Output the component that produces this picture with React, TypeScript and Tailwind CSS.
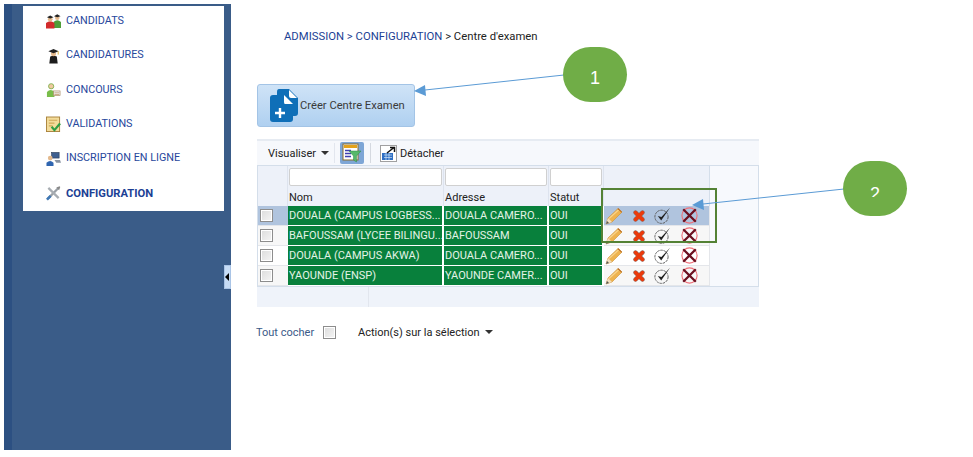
import React from 'react';

const Pencil = () => (
  <svg width="18" height="18" viewBox="0 0 18 18">
    <path d="M1 17 L3 11 L13 1.5 L17 5 L7 15 Z" fill="#eeb34f" stroke="#c98f35" strokeWidth="0.6" />
    <path d="M4 11.5 L14 2.5" stroke="#f8d48c" strokeWidth="1.2" />
    <path d="M12.5 2 L16.5 5.5 L17 5 L13.5 1.2 Z" fill="#b5651d" />
    <path d="M1 17 L3 11 L7 15 Z" fill="#f2dfc0" />
    <path d="M1 17 L2 14 L4 16 Z" fill="#555" />
  </svg>
);

const RedCross = () => (
  <svg width="12" height="12" viewBox="0 0 12 12">
    <path d="M2.5 2.5 L9.5 9.5 M9.5 2.5 L2.5 9.5" stroke="#8f6a60" strokeWidth="4.4" strokeLinecap="round" />
    <path d="M2.5 2.5 L9.5 9.5 M9.5 2.5 L2.5 9.5" stroke="#ec3a0c" strokeWidth="3.2" strokeLinecap="round" />
  </svg>
);

const CheckCircle = () => (
  <svg width="17" height="17" viewBox="0 0 17 17">
    <circle cx="7.5" cy="9.8" r="6.6" fill="none" stroke="#555" strokeWidth="0.9" strokeDasharray="2.5 0.8" />
    <path d="M3.8 9 L7.2 13.4 L16 0.8 L7.4 10 Z" fill="#222" />
  </svg>
);

const BigCross = () => (
  <svg width="17" height="17" viewBox="0 0 17 17">
    <circle cx="8.5" cy="8.5" r="7.6" fill="none" stroke="#ee6f78" strokeWidth="1.1" />
    <path d="M2.2 2.2 L14.8 14.8 M14.8 2.2 L2.2 14.8" stroke="#6b1020" strokeWidth="2.3" />
  </svg>
);

const NewDocIcon = () => (
  <svg width="30" height="34" viewBox="0 0 30 34">
    <path d="M10 0 H20 L29 9 V24 Q29 27 26 27 H24 V20 H8 V3 Q8 0 10 0 Z" fill="#0f6fb8" />
    <path d="M4 6 H15 L24 15 V30 Q24 33 21 33 H4 Q1 33 1 30 V9 Q1 6 4 6 Z" fill="#0f6fb8" />
    <path d="M15 6 L24 15 H16 Q15 15 15 13 Z" fill="#fff" />
    <path d="M20 1 L28 9 H22 Q20 9 20 7 Z" fill="#fff" />
    <path d="M11 19 V29 M6 24 H16" stroke="#fff" strokeWidth="2.4" />
  </svg>
);

const FilterIcon = () => (
  <svg width="20" height="20" viewBox="0 0 20 20">
    <rect x="1" y="1" width="15" height="16" fill="#fff" stroke="#8a6d2a" />
    <rect x="2" y="2" width="13" height="3" fill="#e3a21a" />
    <path d="M3 7.5 H9 M3 10.5 H9 M3 13.5 H9" stroke="#3f3fb0" strokeWidth="1.6" />
    <path d="M7 8 H19 L14.5 13 V19 L11.5 17 V13 Z" fill="#57b86a" stroke="#2e8a46" strokeWidth="0.5" />
  </svg>
);

const DetachIcon = () => (
  <svg width="17" height="17" viewBox="0 0 17 17">
    <rect x="0.5" y="0.5" width="16" height="16" fill="#fff" stroke="#444" strokeDasharray="1 1" />
    <rect x="2" y="8" width="11" height="7" fill="#2f6fc4" />
    <path d="M4 10 H12 M4 12.5 H12 M6 8 V15 M9 8 V15" stroke="#cfe2f7" strokeWidth="0.7" />
    <path d="M7 8 L14 2.5 M10 2.5 H14.5 V7" stroke="#111" strokeWidth="1.5" fill="none" />
  </svg>
);

const PeopleIcon = () => (
  <svg width="16" height="16" viewBox="0 0 16 16">
    <path d="M8 9 Q12 5.5 16 9 V15.5 H8 Z" fill="#4f9d38" />
    <circle cx="12" cy="4.5" r="2.4" fill="#e3b98d" />
    <path d="M8.5 2.8 L12 0.8 L15.5 2.8 L12 4 Z" fill="#222" />
    <path d="M0 10 Q4.5 6.5 9 10 V16 H0 Z" fill="#d22b2b" />
    <circle cx="4.5" cy="6" r="2.5" fill="#e3b98d" />
    <path d="M1 4 L4.5 2.2 L8 4 L4.5 5.2 Z" fill="#222" />
  </svg>
);

const GraduateIcon = () => (
  <svg width="16" height="16" viewBox="0 0 16 16">
    <path d="M3.5 16 L4.5 8.5 Q8 6.8 11.5 8.5 L12.5 16 Z" fill="#1c1c1c" />
    <circle cx="8" cy="5.5" r="2.7" fill="#e3b98d" />
    <path d="M2.5 3 L8 0.5 L13.5 3 L8 5 Z" fill="#222" />
    <path d="M13 3 V6.5" stroke="#e0b030" />
  </svg>
);

const ConcoursIcon = () => (
  <svg width="16" height="16" viewBox="0 0 16 16">
    <circle cx="5.5" cy="4" r="2.8" fill="#f0c9a0" stroke="#6aa83a" strokeWidth="0.8" />
    <path d="M1 15.5 V10 Q5 6 9 10 V15.5 Z" fill="#79bd4a" />
    <rect x="8" y="9" width="7" height="5" fill="#eee" stroke="#a98a62" strokeWidth="0.7" />
    <path d="M9 11 H14 M9 12.8 H14" stroke="#b07a3a" strokeWidth="0.6" />
  </svg>
);

const ValidationIcon = () => (
  <svg width="16" height="17" viewBox="0 0 16 17">
    <rect x="0.5" y="0.5" width="14" height="15.5" fill="#f3dc9a" stroke="#a9823a" />
    <path d="M3 4 H12 M3 7 H9 M3 10 H7" stroke="#cfa95a" strokeWidth="1.2" />
    <path d="M6 11 L9 14.5 L15 7.5" fill="none" stroke="#2f9e44" strokeWidth="2.4" />
  </svg>
);

const OnlineIcon = () => (
  <svg width="16" height="16" viewBox="0 0 16 16">
    <rect x="6" y="1" width="8" height="6" fill="#3f5f8f" stroke="#26364f" strokeWidth="0.6" />
    <path d="M9 9 H15 L16 12 H11 Z" fill="#8a94a3" />
    <circle cx="4.5" cy="7" r="2.5" fill="#e3b98d" />
    <path d="M0.5 15.5 V12 Q4.5 8.5 8 12 V15.5 Z" fill="#2f65b0" />
  </svg>
);

const ToolsIcon = () => (
  <svg width="16" height="16" viewBox="0 0 16 16">
    <path d="M2 14 L13 3" stroke="#9aa0a6" strokeWidth="2.4" />
    <path d="M2.5 2.5 L13.5 13.5" stroke="#a8adb2" strokeWidth="2.4" />
    <path d="M1 15 L5 11" stroke="#3f78b5" strokeWidth="2.8" />
    <path d="M11 2 L14.5 0.8 L15.2 1.5 L14 5" fill="#888" />
  </svg>
);

const Box = () => (
  <span className="block w-[13px] h-[13px] border border-[#8d8d8d] bg-gradient-to-br from-[#dcdcdc] to-[#f5f5f5] shadow-[inset_0_0_0_1px_#fff]" />
);

const menu = [
  { label: 'CANDIDATS', icon: <PeopleIcon /> },
  { label: 'CANDIDATURES', icon: <GraduateIcon /> },
  { label: 'CONCOURS', icon: <ConcoursIcon /> },
  { label: 'VALIDATIONS', icon: <ValidationIcon /> },
  { label: 'INSCRIPTION EN LIGNE', icon: <OnlineIcon /> },
  { label: 'CONFIGURATION', icon: <ToolsIcon />, active: true },
];

const rows = [
  { nom: 'DOUALA (CAMPUS LOGBESS...', adresse: 'DOUALA CAMERO...', bg: 'bg-[#b0c4de]', check: 'bg-[#b0c4de]' },
  { nom: 'BAFOUSSAM (LYCEE BILINGU...', adresse: 'BAFOUSSAM', bg: 'bg-[#f7f7f7]', check: 'bg-[#f7f7f7]' },
  { nom: 'DOUALA (CAMPUS AKWA)', adresse: 'DOUALA CAMERO...', bg: 'bg-white', check: 'bg-white' },
  { nom: 'YAOUNDE (ENSP)', adresse: 'YAOUNDE CAMER...', bg: 'bg-[#f7f7f7]', check: 'bg-[#f7f7f7]' },
];

const green = 'flex items-center px-[1px] bg-[#08803c] text-[#e4f3e6] border-r-2 border-white whitespace-nowrap overflow-hidden';

export default function App() {
  return (
    <div className="relative w-[973px] h-[457px] bg-white overflow-hidden flex pt-1 pl-1 text-[11px] leading-none font-['Roboto',sans-serif]">
      {/* sidebar */}
      <aside className="relative w-[227px] h-[446px] flex bg-[#3a5c88]">
        <div className="w-2 bg-[#2c5082]" />
        <nav className="ml-[11px] mt-[2px] w-[201px] h-[205px] bg-white flex flex-col pl-[23px]">
          {menu.map((m) => (
            <div key={m.label} className="h-[34.4px] shrink-0 flex items-center gap-[5px] -translate-y-[2px]">
              <span className="w-[15px] flex justify-center shrink-0">{m.icon}</span>
              <span className={m.active ? 'text-[11.2px] font-bold text-[#1c3f94]' : 'text-[10.8px] text-[#27479c]'}>{m.label}</span>
            </div>
          ))}
        </nav>
        <div className="absolute right-0 top-[261px] w-[7px] h-6 bg-[#c6dcf5] border border-[#a9c4e6] flex items-center">
          <span className="border-y-[4px] border-y-transparent border-r-[4px] border-r-black" />
        </div>
      </aside>

      {/* main */}
      <main className="ml-[26px] flex flex-col">
        <div className="ml-[27px] mt-[27px] h-[12px] text-[11.3px] text-[#1c3f94] whitespace-nowrap">
          ADMISSION &gt; CONFIGURATION <span className="text-[#222]">&gt; Centre d'examen</span>
        </div>

        <button className="mt-[41px] w-[158px] h-[43px] rounded-[3px] border border-[#a3c4e6] bg-gradient-to-b from-[#cfe3f7] to-[#afd0f0] flex items-center pl-[11px] gap-[1px]">
          <NewDocIcon />
          <span className="text-[#3a3a3a] text-[11.2px]">Créer Centre Examen</span>
        </button>

        <section className="mt-[12px] w-[502px] text-[#222]">
          {/* toolbar */}
          <div className="h-[26px] border-t-2 border-[#e6ebf2] bg-[#f6f8fc] flex items-center pl-[11px]">
            <span className="flex items-center gap-[5px] w-[56px]">
              Visualiser
              <span className="border-x-[4px] border-x-transparent border-t-[4px] border-t-[#333]" />
            </span>
            <span className="ml-[10px] w-px h-5 bg-[#e2e6ee]" />
            <span className="ml-[5px] w-6 h-[22px] rounded-[2px] bg-[#7ea6d6] flex items-center justify-center">
              <FilterIcon />
            </span>
            <span className="ml-[6px] w-px h-5 bg-[#d5d9e0]" />
            <span className="ml-[9px] flex items-center gap-[3px]">
              <DetachIcon />
              Détacher
            </span>
          </div>

          {/* grid */}
          <div className="border border-[#d4deea] border-b-0 bg-[#f7f9fd]">
            <div className="grid grid-cols-[30px_156px_105px_55px_106px] w-[452px]">
              <div className="h-[23px] bg-[#edf1f9] border-r border-[#dde3ee]" />
              <div className="h-[23px] bg-[#edf1f9] border-r border-[#dde3ee] pl-[1px] pt-[2px]"><div className="w-[153px] h-[18px] bg-white border border-[#d0d0d0] rounded-[2px]" /></div>
              <div className="h-[23px] bg-[#edf1f9] border-r border-[#dde3ee] pl-[1px] pt-[2px]"><div className="w-[102px] h-[18px] bg-white border border-[#d0d0d0] rounded-[2px]" /></div>
              <div className="h-[23px] bg-[#edf1f9] border-r border-[#dde3ee] pl-[1px] pt-[2px]"><div className="w-[52px] h-[18px] bg-white border border-[#d0d0d0] rounded-[2px]" /></div>
              <div className="h-[23px] bg-[#edf1f9] border-r border-[#d4deea]" />

              <div className="h-[17px] bg-[#edf1f9] border-r border-[#dde3ee]" />
              <div className="h-[17px] bg-[#edf1f9] border-r border-[#dde3ee] pl-[1px] pt-[3px]">Nom</div>
              <div className="h-[17px] bg-[#edf1f9] border-r border-[#dde3ee] pl-[1px] pt-[3px]">Adresse</div>
              <div className="h-[17px] bg-[#edf1f9] border-r border-[#dde3ee] pl-[1px] pt-[3px]">Statut</div>
              <div className="h-[17px] bg-[#edf1f9] border-r border-[#d4deea]" />

              {rows.map((r) => (
                <React.Fragment key={r.nom}>
                  <div className={`h-5 ${r.check} border-b border-[#e4e6ea] flex items-center pl-[2px]`}><Box /></div>
                  <div className={`h-5 border-b border-white ${green}`}>{r.nom}</div>
                  <div className={`h-5 border-b border-white ${green}`}>{r.adresse}</div>
                  <div className={`h-5 border-b border-white ${green}`}>OUI</div>
                  <div className={`h-5 ${r.bg} border-b border-r border-[#e4e6ea] flex items-center pl-[1px]`}>
                    <Pencil />
                    <span className="ml-[10px]"><RedCross /></span>
                    <span className="ml-[9px]"><CheckCircle /></span>
                    <span className="ml-[10px]"><BigCross /></span>
                  </div>
                </React.Fragment>
              ))}
            </div>
          </div>

          {/* footer */}
          <div className="h-[21px] bg-[#eff3fa] border-t border-[#d4deea] flex">
            <span className="ml-[111px] w-px h-full bg-[#e2e6ee]" />
          </div>
        </section>

        <div className="mt-[18px] flex items-center h-[14px] -ml-[1px]">
          <span className="text-[#3b5a88] w-[57px] whitespace-nowrap">Tout cocher</span>
          <span className="ml-[10px]"><Box /></span>
          <span className="ml-[22px] text-[#222] flex items-center gap-[5px] whitespace-nowrap">
            Action(s) sur la sélection
            <span className="border-x-[4px] border-x-transparent border-t-[4px] border-t-[#333]" />
          </span>
        </div>
      </main>

      {/* annotations over the screenshot */}
      <div className="absolute left-[601px] top-[188px] w-[116px] h-[55px] border-2 border-[#548235]" />
      <svg className="absolute inset-0 pointer-events-none" width="973" height="457">
        <line x1="564" y1="75" x2="425" y2="90" stroke="#5b9bd5" strokeWidth="1" />
        <path d="M414 91 L425 85 L426 96 Z" fill="#5b9bd5" />
        <line x1="844" y1="189" x2="703" y2="204" stroke="#5b9bd5" strokeWidth="1" />
        <path d="M692 205 L703 199 L704 210 Z" fill="#5b9bd5" />
      </svg>
      <div className="absolute left-[563px] top-[47px] w-16 h-[55px] pt-[6px] rounded-full bg-[#70ad47] text-white text-[18px] font-['Liberation_Sans',sans-serif] flex items-center justify-center">1</div>
      <div className="absolute left-[843px] top-[161px] w-16 h-[55px] rounded-full bg-[#70ad47] text-white text-[18px] font-['Liberation_Sans',sans-serif] flex justify-center pt-[24px]">
        <span className="block h-[12px] overflow-hidden">2</span>
      </div>
    </div>
  );
}
